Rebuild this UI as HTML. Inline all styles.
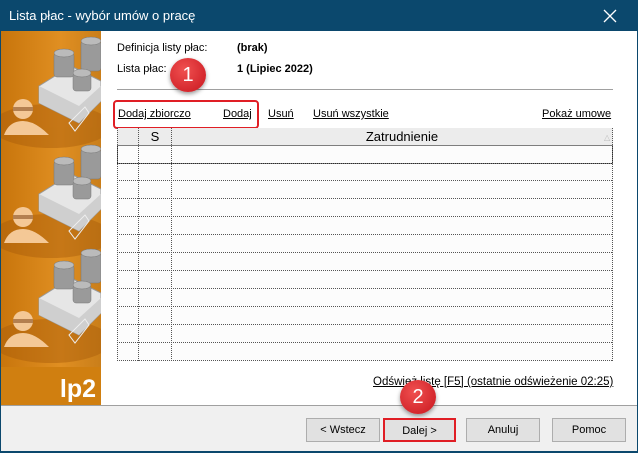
<!DOCTYPE html>
<html><head><meta charset="utf-8"><style>
*{margin:0;padding:0;box-sizing:border-box}
body{width:638px;height:453px;background:#0b486d;font-family:"Liberation Sans",sans-serif;font-size:11px;color:#000;position:relative;overflow:hidden}
.a{position:absolute}
u{text-decoration:underline}
.btn{position:absolute;top:418px;height:24px;width:74px;background:#e1e1e1;border:1px solid #adadad;text-align:center;line-height:22px;font-size:11px}
</style></head><body>
<div class="a" style="left:9px;top:8px;color:#fff;font-size:13px">Lista płac - wybór umów o pracę</div>
<svg class="a" style="left:503px;top:9px" width="12" height="12"></svg>
<svg class="a" style="left:603px;top:9px" width="14" height="14"><path d="M1 1L13 13M13 1L1 13" stroke="#fff" stroke-width="1.3"/></svg>
<div class="a" style="left:1px;top:31px;width:636px;height:420px;background:#fff"></div>
<div class="a" style="left:1px;top:31px;width:100px;height:374px;background:linear-gradient(90deg,#c8750c,#e08f22 60%,#c97e1a)">
 <svg width="100" height="374">
  <g fill="#a85c0a" opacity=".45"><ellipse cx="50" cy="95" rx="60" ry="22"/><ellipse cx="50" cy="205" rx="60" ry="22"/><ellipse cx="50" cy="310" rx="60" ry="22"/></g>
  <g id="g1">
   <polygon points="38,55 70,35 100,50 100,70 78,92 38,72" fill="#e6e6e6" stroke="#999"/>
   <polygon points="38,55 78,75 100,55 100,70 78,92 38,72" fill="#cfcfcf"/>
   <g fill="#9a9a9a" stroke="#777" stroke-width=".5">
    <rect x="53" y="22" width="20" height="24" rx="3"/><ellipse cx="63" cy="22" rx="10" ry="4" fill="#bbb"/>
    <rect x="80" y="10" width="20" height="30" rx="3"/><ellipse cx="90" cy="10" rx="10" ry="4" fill="#bbb"/>
    <rect x="72" y="42" width="18" height="18" rx="3"/><ellipse cx="81" cy="42" rx="9" ry="4" fill="#bbb"/>
   </g>
   <circle cx="22" cy="78" r="10" fill="#f4c896"/><rect x="12" y="76" width="20" height="4" fill="#b48050"/>
   <path d="M3 104 Q8 90 22 90 Q34 90 48 104Z" fill="#f4c896"/>
   <path d="M68 92 L84 76 L88 82 L74 100Z" fill="none" stroke="#eee"/>
  </g>
  <use href="#g1" y="108"/><use href="#g1" y="212"/>
  <rect x="0" y="336" width="100" height="38" fill="#d07f10"/>
  <text x="95" y="366" text-anchor="end" fill="#fff" font-family="Liberation Sans" font-weight="bold" font-size="25">lp2</text>
 </svg>
</div>
<div class="a" style="left:117px;top:42px">Definicja listy płac:</div>
<div class="a" style="left:237px;top:42px;font-weight:bold">(brak)</div>
<div class="a" style="left:117px;top:63px">Lista płac:</div>
<div class="a" style="left:237px;top:63px;font-weight:bold">1 (Lipiec 2022)</div>
<div class="a" style="left:117px;top:89px;width:496px;height:1px;background:#a0a0a0"></div>
<div class="a" style="left:170px;top:58px;width:36px;height:34px;border-radius:50%;background:radial-gradient(circle at 40% 35%,#f05050,#c8161e);color:#fff;font-size:20px;text-align:center;line-height:34px;box-shadow:0 2px 4px rgba(0,0,0,.4)">1</div>
<div class="a" style="left:113px;top:100px;width:146px;height:29px;border:2px solid #e01e25;border-radius:4px"></div>
<div class="a" style="left:118px;top:108px"><u>Dodaj zbiorczo</u></div>
<div class="a" style="left:223px;top:108px"><u>Dodaj</u></div>
<div class="a" style="left:268px;top:108px"><u>Usuń</u></div>
<div class="a" style="left:313px;top:108px"><u>Usuń wszystkie</u></div>
<div class="a" style="left:542px;top:108px"><u>Pokaż umowe</u></div>
<svg class="a" style="left:117px;top:128px" width="496" height="234">
 <rect x="0" y="0" width="496" height="17" fill="#ececec"/>
 <rect x="0" y="17" width="496" height="216" fill="#fcfcfc"/>
 <g stroke="#555" stroke-dasharray="1 1" fill="none">
  <path d="M0.5 0V233M21.5 0V233M54.5 0V233M495.5 0V233"/>
  <path d="M0 35.5H496M0 52.5H496M0 70.5H496M0 88.5H496M0 106.5H496M0 124.5H496M0 142.5H496M0 160.5H496M0 178.5H496M0 196.5H496M0 214.5H496M0 232.5H496"/>
  <rect x="0.5" y="17.5" width="495" height="18" stroke="#000"/>
 </g>
 <text x="38" y="13" text-anchor="middle" font-family="Liberation Sans" font-size="13">S</text>
 <text x="285" y="13" text-anchor="middle" font-family="Liberation Sans" font-size="13">Zatrudnienie</text>
 <text x="487" y="12" font-size="8" fill="#bbb">△</text>
</svg>
<div class="a" style="left:373px;top:376px;font-size:11.5px"><u>Odśwież listę [F5] (ostatnie odświeżenie 02:25)</u></div>
<div class="a" style="left:1px;top:405px;width:636px;height:46px;background:#f0f0f0;border-top:1px solid #a0a0a0"></div>
<div class="a" style="left:400px;top:380px;width:36px;height:34px;border-radius:50%;background:radial-gradient(circle at 40% 35%,#f05050,#c8161e);color:#fff;font-size:20px;text-align:center;line-height:34px;box-shadow:0 2px 4px rgba(0,0,0,.4)">2</div>
<div class="btn" style="left:306px">&lt; Wstecz</div>
<div class="btn" style="left:383px;width:73px;border:2px solid #e01e25">Dalej &gt;</div>
<div class="btn" style="left:466px">Anuluj</div>
<div class="btn" style="left:552px">Pomoc</div>
</body></html>
